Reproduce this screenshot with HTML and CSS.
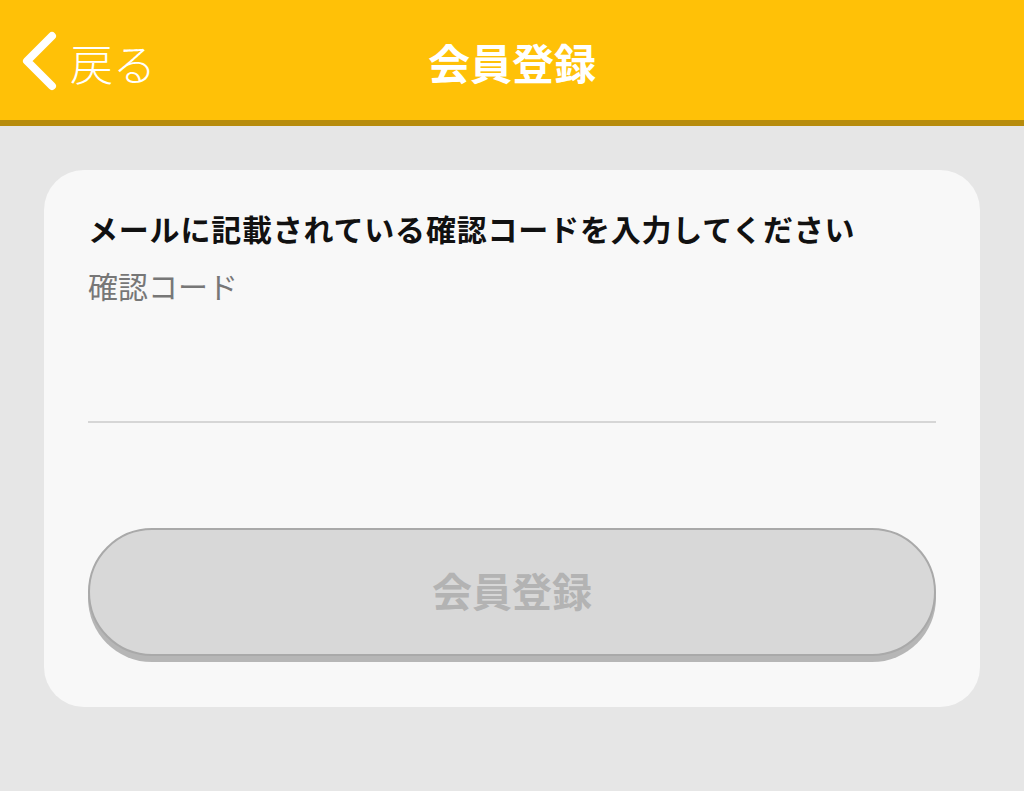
FILE: index.html
```html
<!DOCTYPE html>
<html lang="ja">
<head>
<meta charset="utf-8">
<title>会員登録</title>
<link rel="stylesheet" href="styles.css">
</head>
<body>
<header class="topbar">
  <a class="back" href="#">
    <svg class="chev" width="40" height="64" viewBox="0 0 40 64" aria-hidden="true">
      <polyline points="32,6 7,31 32,56" fill="none" stroke="#fff" stroke-width="8" stroke-linecap="round" stroke-linejoin="round"/>
    </svg>
    <span class="back-label">戻る</span>
  </a>
  <h1 class="title">会員登録</h1>
</header>
<main class="content">
  <section class="card">
    <p class="lead">メールに記載されている確認コードを入力してください</p>
    <label class="label" for="code">確認コード</label>
    <input class="field" id="code" type="text">
    <button class="submit" type="button" disabled>会員登録</button>
  </section>
</main>
</body>
</html>
```

FILE: styles.css
```css
html, body {
  margin: 0;
  padding: 0;
}
body {
  background: #e6e6e6;
  font-family: "Noto Sans CJK JP", "Noto Sans", sans-serif;
  width: 1024px;
  height: 791px;
  overflow: hidden;
}
.topbar {
  position: relative;
  height: 120px;
  background: #ffc107;
  border-bottom: 6px solid #b78c0c;
  display: flex;
  align-items: center;
  justify-content: center;
}
.back {
  position: absolute;
  left: 20px;
  top: 30px;
  display: flex;
  align-items: center;
  text-decoration: none;
  color: #fff;
  height: 64px;
}
.chev {
  display: block;
}
.back-label {
  font-size: 43px;
  font-weight: 300;
  margin-left: 10px;
  line-height: 64px;
  color: #fff;
}
.title {
  margin: 0;
  font-size: 42px;
  font-weight: 700;
  color: #fff;
  line-height: 1;
  padding-top: 4px;
}
.content {
  padding: 44px 44px 0 44px;
}
.card {
  background: #f8f8f8;
  border-radius: 40px;
  padding: 38px 44px 51px 44px;
  display: flex;
  flex-direction: column;
}
.lead {
  margin: 0;
  font-size: 30px;
  font-weight: 700;
  line-height: 40px;
  color: #111;
  letter-spacing: 0.8px;
}
.label {
  margin-top: 17px;
  font-size: 30px;
  line-height: 40px;
  color: #777;
}
.field {
  box-sizing: border-box;
  height: 118px;
  border: none;
  border-bottom: 2px solid #d6d6d6;
  background: transparent;
  padding: 0;
  margin: 0;
  outline: none;
  font-size: 30px;
}
.submit {
  box-sizing: border-box;
  margin-top: 105px;
  height: 128px;
  border: 2px solid #a9a9a9;
  border-radius: 64px;
  background: #d8d8d8;
  box-shadow: 0 6px 0 #b6b6b6;
  color: #b3b3b3;
  font-family: "Noto Sans CJK JP", "Noto Sans", sans-serif;
  font-size: 40px;
  font-weight: 700;
  padding: 0 0 5px 0;
}
```
